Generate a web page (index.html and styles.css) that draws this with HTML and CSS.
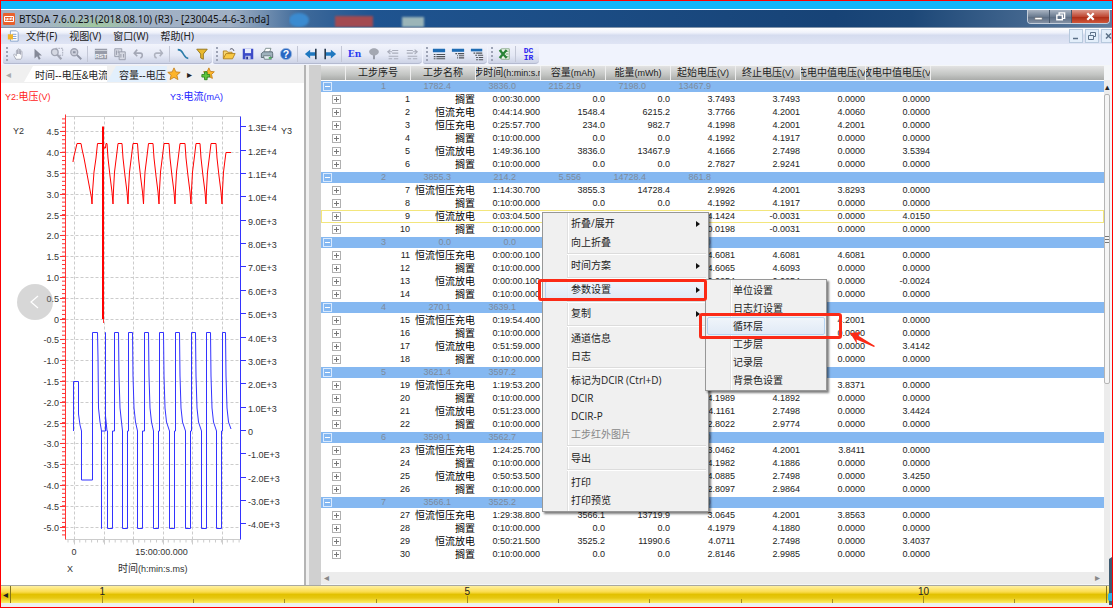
FILE: index.html
```html
<!DOCTYPE html>
<html lang="zh-CN">
<head>
  <meta charset="UTF-8">
  <title>BTSDA 7.6.0.231</title>
  <link rel="stylesheet" href="styles.css">
</head>
<body>
  <div class="window">
    <div class="strip"></div>

    <header class="titlebar">
      <svg class="app-icon" viewBox="0 0 12 12"><rect width="12" height="12" rx="1" fill="#e8602c"/><path d="M1.500 3.500h9v5h-9z" fill="none" stroke="#fff"/><path d="M3 5v2h1.500V5M6 5v2M7.500 7V5H9v2" fill="none" stroke="#fff" stroke-width=".8"/></svg>
      <h1>BTSDA 7.6.0.231(2018.08.10) (R3) - [230045-4-6-3.nda]</h1>
      <div class="desktop-blur"><i class="orb"></i><i class="red"></i><i class="paper"></i></div>
      <div class="win-buttons">
        <button aria-label="最小化"><svg viewBox="0 0 12 12"><path d="M2 7h8v2.500H2z" fill="#fff" stroke="#555" stroke-width=".5"/></svg></button>
        <button aria-label="还原"><svg viewBox="0 0 12 12"><path d="M4.500 4V2h6v6H8.500M2 4.500h6v5H2z" fill="none" stroke="#fff" stroke-width="1.500"/></svg></button>
        <button class="close" aria-label="关闭"><svg viewBox="0 0 12 12"><path d="M2.500 2.500l7 7M9.500 2.500l-7 7" stroke="#fff" stroke-width="2.400"/></svg></button>
      </div>
    </header>

    <nav class="menubar">
      <svg class="doc-icon" viewBox="0 0 14 14"><path d="M4 1h7l2 2v10H4z" fill="#fff" stroke="#7d9bc4"/><path d="M6 5h5M6 7.500h5M6 10h5" stroke="#6a90cc"/><path d="M1 5h6v6H1z" fill="#f0b429"/></svg>
      <button>文件(F)</button>
      <button>视图(V)</button>
      <button>窗口(W)</button>
      <button>帮助(H)</button>
      <div class="mdi-buttons">
        <button aria-label="最小化子窗口"><svg viewBox="0 0 12 12"><path d="M3 8.500h5" stroke="#5b7087" stroke-width="1.500"/></svg></button>
        <button aria-label="还原子窗口"><svg viewBox="0 0 12 12"><path d="M4.500 4.500V2.500h5v4H8M2.500 5.500h5v4h-5z" fill="none" stroke="#5b7087"/></svg></button>
        <button aria-label="关闭子窗口"><svg viewBox="0 0 12 12"><path d="M4 3.500l5 5M9 3.500l-5 5" stroke="#5b7087" stroke-width="1.500"/></svg></button>
      </div>
    </nav>

    <div class="toolbar">
      <div class="band">
        <span class="grip"></span>
        <button aria-label="平移"><svg viewBox="0 0 16 16"><path d="M4.500 14L2 9.500c-.5-1.300.7-1.800 1.500-.8L5 10V4.500c0-1.300 1.500-1.300 1.500 0V8V3c0-1.300 1.700-1.300 1.700 0v5V3.500c0-1.200 1.600-1.200 1.600 0V8.500V5.500c0-1.200 1.600-1.200 1.600 0V10c0 2-.6 3-1.400 4z" fill="#fafbfd" stroke="#a2a6b4"/></svg></button>
        <button aria-label="选择"><svg viewBox="0 0 16 16"><path d="M4 2v11l3-2.500L9 14.500l2-1-2-3.800h3.500z" fill="#858a98"/></svg></button>
        <button aria-label="框选缩放"><svg viewBox="0 0 16 16"><rect x="6.500" y="1.500" width="8" height="8" fill="none" stroke="#a0a4b2" stroke-dasharray="2 1"/><circle cx="5.500" cy="6" r="3.800" fill="#d5d8e2" stroke="#a0a4b2" stroke-width="1.500"/><path d="M8.500 9l4.500 5" stroke="#a0a4b2" stroke-width="2.500"/></svg></button>
        <button aria-label="缩放"><svg viewBox="0 0 16 16"><circle cx="6" cy="6" r="4" fill="#cdd0dc" stroke="#a0a4b2" stroke-width="1.500"/><path d="M4.500 6h3M9 9l5 5" stroke="#8f94a4" stroke-width="2.200"/></svg></button>
        <span class="sep"></span>
        <button aria-label="复位"><svg viewBox="0 0 16 16"><rect x="1" y="2" width="14" height="12" fill="#989ca9"/><path d="M1 4h14" stroke="#d4d7e0"/><text x="8" y="12" class="glyph-rst">RST</text></svg></button>
        <button aria-label="复制"><svg viewBox="0 0 16 16"><path d="M2 2h8v9H2z" fill="#d6d9e3" stroke="#9599a8"/><path d="M7 5.500h7v9H7z" fill="#d6d9e3" stroke="#9599a8"/><path d="M4 4v5M6 4v3M9 8v4M12 8v4" stroke="#9599a8"/></svg></button>
        <button aria-label="撤销"><svg viewBox="0 0 16 16"><path d="M3 7h6.500c3 0 3 5 0 5.500M6 3L2.500 7 6 10.500" fill="none" stroke="#a4a8b6" stroke-width="1.800"/></svg></button>
        <button aria-label="重做"><svg viewBox="0 0 16 16"><path d="M12.500 7H6.500c-3.500 0-3 5 0 5.500M10 3l3 4-3 3.500" fill="none" stroke="#aeb2bf" stroke-width="1.800"/></svg></button>
        <span class="sep"></span>
        <button aria-label="曲线"><svg viewBox="0 0 16 16"><path d="M2 3c5 0 5 3 7 6s3 4 5 4" fill="none" stroke="#2b7ba8" stroke-width="1.800"/></svg></button>
        <button aria-label="筛选"><svg viewBox="0 0 16 16"><path d="M2 2.500h12L9.500 8v6l-3-1.500V8z" fill="#e9b92f" stroke="#8f6e14"/></svg></button>
      </div>

      <div class="band">
        <span class="grip"></span>
        <button aria-label="打开"><svg viewBox="0 0 16 16"><path d="M1.500 13V4.500h4l1 1.500h5v2" fill="#f7d774" stroke="#b07f1c"/><path d="M1.500 13.500l3-6h10.500l-3 6z" fill="#f9c945" stroke="#b07f1c"/><path d="M9 3c2-2 4-1 4.500 1.500" fill="none" stroke="#334"/></svg></button>
        <button aria-label="保存"><svg viewBox="0 0 16 16"><path d="M2 2h12v12H2z" fill="#3c4bc8"/><path d="M4.500 2h7v5h-7z" fill="#e8ecfb"/><path d="M5 10h6v4H5z" fill="#c3c9ec"/><path d="M6 11h2v3H6z" fill="#27318c"/></svg></button>
        <button aria-label="打印"><svg viewBox="0 0 16 16"><path d="M4.500 6L6.500 1.500h6L11 6" fill="#fff" stroke="#788"/><path d="M1.500 7.500L4 5.500h10l.5 2V12H1.500z" fill="#9fb2bd" stroke="#54646e"/><path d="M4 10h8l1 4H5z" fill="#e3eef2" stroke="#68787f"/><path d="M10 11.500h3v2h-3z" fill="#43ad55"/></svg></button>
        <button aria-label="帮助"><svg viewBox="0 0 16 16"><circle cx="8" cy="8" r="6.500" fill="#2768c4" stroke="#9ab5dd"/><text x="8" y="12" class="glyph-help">?</text></svg></button>
        <span class="sep"></span>
        <button aria-label="向左"><svg viewBox="0 0 16 16"><path d="M1 8l6-5v3h6v4H7v3z" fill="#1f78c0"/><path d="M13.500 2v12" stroke="#23364a" stroke-width="1.800"/></svg></button>
        <button aria-label="向右"><svg viewBox="0 0 16 16"><path d="M15 8L9 3v3H3v4h6v3z" fill="#1f78c0"/><path d="M2.500 2v12" stroke="#23364a" stroke-width="1.800"/></svg></button>
        <span class="sep"></span>
        <button class="en">En</button>
        <button aria-label="树"><svg viewBox="0 0 16 16"><path d="M7 9h2v5H7z" fill="#8e939f"/><path d="M8 1.500c3 0 6 2 5.500 4.500S11 9 8 10C5 9 3 8.500 2.500 6S5 1.500 8 1.500z" fill="#a4a8b2"/></svg></button>
        <button aria-label="上一层"><svg viewBox="0 0 16 16"><path d="M7 4h7M7 7h7M2 5.500h5M5 3L2 5.500 5 8M3 10.500h11M3 13.500h4M9 13.500h5" fill="none" stroke="#a9adba" stroke-width="1.200"/></svg></button>
        <button aria-label="下一层"><svg viewBox="0 0 16 16"><path d="M2 4h7M2 7h7M9 5.500h5M11 3l3 2.500L11 8M3 10.500h11M3 13.500h4M9 13.500h5" fill="none" stroke="#a9adba" stroke-width="1.200"/></svg></button>
      </div>

      <div class="band">
        <span class="grip"></span>
        <button aria-label="循环层"><svg viewBox="0 0 16 16"><path d="M1 2h14v4H1z" fill="#1f6cb4"/><path d="M2 8.500h2M5 8.500h10M2 11h2M5 11h10M2 13.500h2M5 13.500h10" stroke="#4d5157" stroke-width="1.200"/></svg></button>
        <button aria-label="工步层"><svg viewBox="0 0 16 16"><path d="M1 2h14v3.500H1z" fill="#1f6cb4"/><path d="M5 7.500h2M8 7.500h7M7 10h1M9 10h6M7 12.500h1M9 12.500h6" stroke="#4d5157" stroke-width="1.300"/></svg></button>
        <button aria-label="记录层"><svg viewBox="0 0 16 16"><path d="M1 2h13v3H1z" fill="#1f6cb4"/><path d="M4 7h2M7 7h7M6 9.500h2M9 9.500h6M7 12h2M10 12h5M7 14.500h2M10 14.500h5" stroke="#4d5157" stroke-width="1.200"/></svg></button>
      </div>

      <div class="band">
        <span class="grip"></span>
        <button aria-label="导出Excel"><svg viewBox="0 0 16 16"><path d="M5 2h9v12H5z" fill="#eef5ec" stroke="#88a888"/><path d="M10 5h3M10 8h3M10 11h3" stroke="#6d9a6d"/><path d="M3 3.500l8 9M11 3.500l-8 9" stroke="#2a8437" stroke-width="2.600"/></svg></button>
        <span class="sep"></span>
        <button class="dcir"><span>DC</span><span>IR</span></button>
      </div>
    </div>

    <main class="main">
      <section class="chart-pane">
        <div class="tabs">
          <button class="tab-arrow dim" aria-label="上一个">◂</button>
          <button class="tab">时间--电压&amp;电流</button>
          <button class="tab second">容量--电压</button>
          <button class="tab-icon" aria-label="收藏"><svg viewBox="0 0 16 16"><path d="M8 1l2.100 4.600 5 .5-3.800 3.300 1.200 5L8 11.800l-4.500 2.600 1.200-5L.9 6.100l5-.5z" fill="#fdb42a" stroke="#c7811a"/></svg></button>
          <button class="tab-arrow" aria-label="下一个">▸</button>
          <button class="tab-icon" aria-label="添加收藏"><svg viewBox="0 0 16 16"><path d="M9 1l1.800 4 4.400.5-3.200 3 1 4.500L9 10.800 5 13l1-4.500-3.200-3L7.200 5z" fill="#fdb42a" stroke="#c7811a"/><path d="M4 5.500h3v3h3v3H7v3H4v-3H1v-3h3z" fill="#5ec73c" stroke="#2d8420"/></svg></button>
        </div>
        <div class="legend">
          <span class="y2">Y2:<b>电压</b>(V)</span>
          <span class="y3">Y3:<b>电流</b>(mA)</span>
        </div>
        <svg class="chart" id="chart" viewBox="1 105 303 480"></svg>
        <button class="prev" aria-label="上一张"><svg viewBox="0 0 16 16"><path d="M11 2L4 8l7 6" fill="none" stroke="#fff" stroke-width="1.200"/></svg></button>
      </section>

      <div class="splitter"></div>

      <section class="grid-pane">
        <div class="grid-row">
          <div class="grid-scroll">
            <table class="steps">
              <thead>
                <tr>
                  <th class="expand"></th>
                  <th><div>工步序号</div></th>
                  <th><div>工步名称</div></th>
                  <th><div>工步时间<small>(h:min:s.ms)</small></div></th>
                  <th><div>容量<small>(mAh)</small></div></th>
                  <th><div>能量<small>(mWh)</small></div></th>
                  <th><div>起始电压<small>(V)</small></div></th>
                  <th><div>终止电压<small>(V)</small></div></th>
                  <th><div>充电中值电压<small>(V)</small></div></th>
                  <th><div>放电中值电压<small>(V)</small></div></th>
                  <th class="rest"></th>
                </tr>
              </thead>
              <tbody id="rows"></tbody>
            </table>
          </div>
          <div class="vscroll">
            <span class="up">▴</span>
            <div class="thumb"><i></i></div>
          </div>
        </div>
        <div class="hscroll"><span>◂</span><span>▸</span></div>
      </section>

      <div class="menu context">
        <ul>
          <li><button class="sub">折叠/展开</button></li>
          <li><button>向上折叠</button></li>
          <li class="line"></li>
          <li><button class="sub">时间方案</button></li>
          <li class="line"></li>
          <li><button class="sub hover">参数设置</button></li>
          <li class="line"></li>
          <li><button class="sub">复制</button></li>
          <li class="line"></li>
          <li><button>通道信息</button></li>
          <li><button>日志</button></li>
          <li class="line"></li>
          <li><button>标记为DCIR (Ctrl+D)</button></li>
          <li><button>DCIR</button></li>
          <li><button>DCIR-P</button></li>
          <li><button disabled>工步红外图片</button></li>
          <li class="line"></li>
          <li><button>导出</button></li>
          <li class="line"></li>
          <li><button>打印</button></li>
          <li><button>打印预览</button></li>
        </ul>
      </div>
      <div class="menu submenu">
        <ul>
          <li><button>单位设置</button></li>
          <li><button>日志灯设置</button></li>
          <li><button class="hover">循环层</button></li>
          <li><button>工步层</button></li>
          <li><button>记录层</button></li>
          <li><button>背景色设置</button></li>
        </ul>
      </div>
      <div class="mark mark-param"></div>
      <div class="mark mark-cycle"></div>
      <svg class="mark-arrow" viewBox="0 0 26 16"><path d="M0 1l11-1-3 3.500L25 14l-1 1L6.500 7.500 7 12z" fill="#fb2a17"/></svg>
    </main>

    <footer class="ruler">
      <button aria-label="向左滚动">◂</button>
      <div class="scale">
        <span class="big">1</span><span></span><span></span><span></span><span class="big">5</span><span></span>
        <span></span><span></span><span></span><span class="big">10</span><span></span><span></span>
      </div>
      <svg class="dock" viewBox="0 0 4 48"><path d="M1 2l3-2v48H1z" fill="#3d5a70"/><circle cx="3" cy="40" r="4" fill="#2fb5e6"/></svg>
    </footer>
  </div>

  <script src="script.js"></script>
</body>
</html>
```

FILE: styles.css
```css
* {
  box-sizing: border-box;
}
body {
  margin: 0;
  font-family: "Liberation Sans", "Noto Sans CJK SC", sans-serif;
  font-size: 10px;
  color: #222;
}
button {
  margin: 0;
  padding: 0;
  border: 0;
  background: none;
  font: inherit;
  color: inherit;
}
ul {
  list-style: none;
  margin: 0;
  padding: 0;
}
.window {
  display: flex;
  flex-direction: column;
  height: 100vh;
  border: 1px solid #f00;
  background: #f0f0f0;
  overflow: hidden;
}
.strip {
  flex: none;
  height: 9px;
  background: #12b6f9;
  border-bottom: 1px solid #fff;
}

/* title bar */
.titlebar {
  flex: none;
  display: flex;
  align-items: center;
  height: 18px;
  padding-left: 2px;
  background:
    radial-gradient(ellipse 50px 12px at 92px 17px, rgba(160, 205, 150, .9), transparent),
    linear-gradient(90deg, #a3b3c7 0, #a0b0c4 230px, #3f6a9a 300px, #1f5490 370px, #174376 75%, #1d4878 82%, #5f7d9f);
  border-bottom: 1px solid #8496ab;
}
.app-icon {
  width: 12px;
  height: 12px;
}
.titlebar h1 {
  flex: none;
  width: 270px;
  margin: 0 0 0 4px;
  font: 10px "Noto Sans", sans-serif;
  color: #111;
  white-space: nowrap;
}
.desktop-blur {
  flex: 1;
  display: flex;
  align-self: stretch;
  align-items: flex-end;
  overflow: hidden;
}
.desktop-blur i {
  filter: blur(1px);
}
.orb {
  width: 20px;
  height: 14px;
  border-radius: 50%;
  background: #3b8bd0;
}
.red {
  width: 38px;
  height: 11px;
  margin-left: 26px;
  background: #a34a50;
}
.paper {
  width: 22px;
  height: 10px;
  margin-left: 29px;
  background: #9bb5b8;
}
.win-buttons {
  display: flex;
  align-self: flex-start;
  border: 1px solid #c3cedb;
  border-top: 0;
  border-radius: 0 0 4px 4px;
  margin-right: 2px;
  overflow: hidden;
}
.win-buttons button {
  display: flex;
  align-items: center;
  justify-content: center;
  width: 22px;
  height: 13px;
  border-right: 1px solid #48586c;
  background: linear-gradient(#a9b4c2, #6c7c91 50%, #58697f 51%, #8492a5);
}
.win-buttons .close {
  width: 37px;
  border: 0;
  background: linear-gradient(#dc9a8c, #c04a35 50%, #ab2a14 51%, #d0573a);
}
.win-buttons svg {
  width: 11px;
  height: 11px;
}

/* menu bar */
.menubar {
  flex: none;
  display: flex;
  align-items: center;
  gap: 12px;
  height: 16px;
  padding-left: 6px;
  background: linear-gradient(#fff, #eef1fa 30%, #d5dcef 45%, #dfe4f4);
  font-family: "Noto Sans", "Noto Sans CJK SC", sans-serif;
}
.menubar button {
  line-height: 14px;
  white-space: nowrap;
}
.doc-icon {
  width: 12px;
  height: 12px;
  margin-right: -5px;
}
.mdi-buttons {
  display: flex;
  gap: 2px;
  margin-left: auto;
}
.mdi-buttons button {
  width: 14px;
  height: 14px;
  border: 1px solid #b7c9dd;
  background: #e3eefa;
}
.mdi-buttons svg {
  display: block;
  width: 12px;
  height: 12px;
}
.mdi-buttons button:last-child {
  width: 11px;
}

/* toolbar */
.toolbar {
  flex: none;
  display: flex;
  gap: 1px;
  height: 21px;
  padding-left: 2px;
  background: #f0f3fd;
}
.band {
  display: flex;
  align-items: center;
  height: 20px;
  padding-right: 1px;
  border-radius: 0 0 4px 2px;
  background: linear-gradient(#f2f4fc, #e4e8f5 60%, #cdd3e6);
  border-bottom: 1px solid #b4bad0;
}
.band button {
  display: flex;
  align-items: center;
  justify-content: center;
  width: 19px;
  height: 19px;
}
.band svg {
  width: 14px;
  height: 14px;
}
.grip {
  width: 2px;
  height: 14px;
  margin: 0 1px 0 3px;
  background: repeating-linear-gradient(#9da3b5 0 2px, transparent 2px 4px);
}
.sep {
  width: 1px;
  height: 16px;
  margin: 0 3px 0 2px;
  background: #c3c7d6;
}
.glyph-rst {
  font: bold 7px "Liberation Sans", sans-serif;
  fill: #f3f4f8;
  text-anchor: middle;
}
.glyph-help {
  font: bold 12px "Liberation Sans", sans-serif;
  fill: #fff;
  text-anchor: middle;
}
.band .en {
  font: bold 9px "DejaVu Serif", serif;
  color: #2a3bf0;
}
.band .dcir {
  flex-direction: column;
  font: bold 8px "Liberation Mono", monospace;
  line-height: 7px;
  color: #2a22f0;
}

/* panes */
.main {
  flex: 1;
  display: flex;
  min-height: 0;
  position: relative;
}
.chart-pane {
  flex: none;
  width: 303px;
  background: #fff;
  position: relative;
}
.tabs {
  display: flex;
  align-items: center;
  height: 18px;
  background: #f0f0f0;
}
.tab {
  height: 16px;
  width: 83px;
  padding-left: 11px;
  background: #fff;
  clip-path: polygon(0 100%, 9px 0, 100% 0, 100% 100%);
  text-align: left;
  white-space: nowrap;
  overflow: hidden;
}
.tab.second {
  width: 60px;
  padding-left: 12px;
  background: #e2effc;
}
.tab-arrow {
  width: 14px;
}
.tab-arrow.dim {
  width: 23px;
  padding-right: 8px;
  color: #aaa;
}
.tab-icon {
  width: 14px;
  height: 14px;
  margin-right: 1px;
}
.tab-arrow + .tab-icon {
  margin-left: 5px;
}
.tab-icon svg {
  display: block;
}
.legend {
  display: flex;
  height: 22px;
  padding: 7px 0 0 4px;
  font-size: 9px;
  line-height: 14px;
}
.legend span {
  flex: 0 0 165px;
}
.legend b {
  font-size: 10px;
  font-weight: normal;
}
.y2 {
  color: #f22;
}
.y3 {
  color: #22f;
}
.chart {
  display: block;
  width: 100%;
}
.chart text {
  font-size: 9px;
  fill: #333;
}
.chart .cjk {
  font-size: 10px;
}
.end {
  text-anchor: end;
}
.mid {
  text-anchor: middle;
}
.gridline {
  stroke: #ccc;
  stroke-dasharray: 3 2;
}
.frame {
  stroke: #ccc;
}
.axis-red {
  stroke: #f33;
}
.axis-blue {
  stroke: #33f;
}
.series-red, .series-blue {
  fill: none;
  stroke: #f00;
}
.series-blue {
  stroke: #33f;
}
.spike {
  stroke: #f00;
  stroke-width: 2;
}
.prev {
  position: absolute;
  left: 16px;
  top: 219px;
  width: 36px;
  height: 36px;
  border-radius: 50%;
  background: rgba(140, 140, 140, .35);
}
.prev svg {
  display: block;
  width: 16px;
  height: 16px;
  margin: auto;
}
.splitter {
  flex: none;
  width: 17px;
  border-left: 2px solid #b4b4b4;
  background: linear-gradient(90deg, #f0f0f0 3px, #d0d0d0 3px);
}

/* step table */
.grid-pane {
  flex: 1;
  display: flex;
  flex-direction: column;
  min-width: 0;
  padding: 1px 2px 1px 0;
  background: #f4f6f8;
}
.grid-row {
  flex: 1;
  display: flex;
  min-height: 0;
}
.grid-scroll {
  flex: 1;
  min-width: 0;
  overflow: hidden;
  background: #fff;
}
.steps {
  width: 100%;
  table-layout: fixed;
  border-spacing: 0;
}
.steps th {
  width: 65px;
  height: 14px;
  padding: 0;
  border-right: 1px solid #eee;
  background: linear-gradient(#e2e2e2, #c4c6c4 60%, #a9aba9);
  font-weight: normal;
}
.steps th div {
  display: flex;
  justify-content: center;
  overflow: hidden;
  line-height: 14px;
  white-space: nowrap;
}
.steps small {
  font-size: 9px;
}
.steps .expand {
  width: 25px;
}
.steps .rest {
  width: auto;
  border: 0;
}
.steps td {
  padding: 0 1px 0 0;
  border-top: 1px solid #fff;
  border-bottom: 1px solid #fff;
  font-size: 9px;
  line-height: 11px;
  height: 13px;
  text-align: right;
  white-space: nowrap;
}
.steps td.name {
  font-size: 10px;
  color: #000;
}
.steps td.toggle {
  padding: 0 0 0 11px;
  text-align: left;
}
.steps .cycle td {
  padding-right: 25px;
  background: #85b8f1;
  color: #7d8b9c;
}
.steps .cycle td.toggle {
  padding: 0 0 0 2px;
}
.toggle button {
  display: block;
  width: 9px;
  height: 9px;
  border: 1px solid #b0b0b0;
  background: linear-gradient(#777, #777) center / 5px 1px no-repeat, linear-gradient(#777, #777) center / 1px 5px no-repeat;
}
.cycle .toggle button {
  border-color: #d9eaff;
  background: linear-gradient(#fff, #fff) center / 5px 1px no-repeat;
}
.steps .current td {
  border-color: #f3e67c;
}
.steps .current td:first-child {
  border-left: 1px solid #f3e67c;
  padding-left: 10px;
}
.steps .current td:last-child {
  border-right: 1px solid #f3e67c;
}
.vscroll {
  width: 6px;
  margin-top: 14px;
  background: #ececec;
  overflow: hidden;
}
.up {
  display: block;
  height: 14px;
  line-height: 14px;
  font-size: 9px;
  text-align: center;
}
.thumb {
  display: flex;
  align-items: center;
  justify-content: center;
  height: 59%;
  border: 1px solid #b5b5b5;
  border-radius: 2px;
  background: #f5f5f5;
}
.thumb i {
  width: 4px;
  height: 7px;
  background: repeating-linear-gradient(#777 0 1px, transparent 1px 3px);
}
.hscroll {
  flex: none;
  display: flex;
  justify-content: space-between;
  height: 12px;
  padding: 0 10px 0 3px;
  background: #ececec;
  line-height: 12px;
  color: #888;
}

/* popup menus */
.menu {
  position: absolute;
  border: 1px solid #979797;
  background: linear-gradient(90deg, transparent 24px, #e0e0e0 24px 25px, #fff 25px 26px, transparent 26px) #f0f0f0;
  box-shadow: 2px 2px 2px rgba(0, 0, 0, .5);
  font-family: "Open Sans", "Noto Sans CJK SC", sans-serif;
}
.context {
  left: 541px;
  top: 147px;
  width: 167px;
  padding: 2px;
}
.submenu {
  left: 704px;
  top: 214px;
  width: 122px;
  padding: 1px;
}
.menu button {
  display: block;
  width: 100%;
  height: 18px;
  padding-left: 25px;
  border: 1px solid transparent;
  border-radius: 2px;
  line-height: 15px;
  text-align: left;
  white-space: nowrap;
}
.menu button:disabled {
  color: #888;
}
.menu .sub {
  display: flex;
  justify-content: space-between;
  padding-right: 5px;
}
.sub::after {
  content: "";
  align-self: center;
  border: 3px solid transparent;
  border-left: 4px solid #111;
  border-right: 0;
}
.menu .hover {
  border-color: #b5d3f2;
  background: linear-gradient(rgba(240, 246, 253, .8), rgba(220, 232, 247, .8));
}
.line {
  height: 6px;
  margin-left: 22px;
  background: linear-gradient(transparent 2px, #dcdcdc 2px 3px, #fff 3px 4px, transparent 4px);
}
.mark {
  position: absolute;
  border: 3px solid #fb2a17;
  border-radius: 3px;
  pointer-events: none;
}
.mark-param {
  left: 537px;
  top: 214px;
  width: 169px;
  height: 22px;
}
.mark-cycle {
  left: 698px;
  top: 248px;
  width: 143px;
  height: 26px;
}
.mark-arrow {
  position: absolute;
  left: 849px;
  top: 267px;
  width: 26px;
  height: 16px;
}

/* bottom ruler */
.ruler {
  flex: none;
  display: flex;
  height: 22px;
  padding-right: 5px;
  position: relative;
  border-top: 1px solid #a9a9a0;
  border-bottom: 4px solid #eef0f0;
  background: linear-gradient(#fff0a0, #fbdc4c 35%, #e2c100 50%, #e6c810 70%, #fff06a);
}
.ruler button {
  width: 10px;
  border-right: 1px solid #85741a;
}
.scale {
  flex: 1;
  display: grid;
  grid-template-columns: repeat(12, 1fr);
  border-right: 1px solid #85741a;
}
.scale span {
  margin-right: -6px;
  width: 12px;
  justify-self: end;
  text-align: center;
  line-height: 12px;
  background: linear-gradient(#a08c20, #a08c20) center bottom / 1px 4px no-repeat;
}
.scale .big {
  background-size: 1px 7px;
}
.scale span:last-child {
  background: none;
}
.dock {
  position: absolute;
  right: 0;
  bottom: -2px;
  width: 4px;
  height: 48px;
}
```

FILE: script.js
```js
// [序号, 名称, 时间, 容量, 能量, 起始电压, 终止电压, 充电中值, 放电中值]
const REST = '搁置', CC = '恒流充电', CV = '恒压充电', DC = '恒流放电', CCCV = '恒流恒压充电';
const Z = '0.0000';

const cycles = [
  { head: ['1', '1782.4', '3836.0', '215.219', '7198.0', '13467.9'], steps: [
    [1, REST, '0:00:30.000', '0.0', '0.0', '3.7493', '3.7493', Z, Z],
    [2, CC, '0:44:14.900', '1548.4', '6215.2', '3.7766', '4.2001', '4.0060', Z],
    [3, CV, '0:25:57.700', '234.0', '982.7', '4.1998', '4.2001', '4.2001', Z],
    [4, REST, '0:10:00.000', '0.0', '0.0', '4.1992', '4.1917', Z, Z],
    [5, DC, '1:49:36.100', '3836.0', '13467.9', '4.1666', '2.7498', Z, '3.5394'],
    [6, REST, '0:10:00.000', '0.0', '0.0', '2.7827', '2.9241', Z, Z]
  ]},
  { head: ['2', '3855.3', '214.2', '5.556', '14728.4', '861.8'], steps: [
    [7, CCCV, '1:14:30.700', '3855.3', '14728.4', '2.9926', '4.2001', '3.8293', Z],
    [8, REST, '0:10:00.000', '0.0', '0.0', '4.1992', '4.1917', Z, Z],
    [9, DC, '0:03:04.500', '', '', '4.1424', '-0.0031', Z, '4.0150'],
    [10, REST, '0:10:00.000', '', '', '0.0198', '-0.0031', Z, Z]
  ]},
  { head: ['3', '0.0', '0.0', '', '', '0.0'], steps: [
    [11, CCCV, '0:00:00.100', '', '', '4.6081', '4.6081', '4.6081', Z],
    [12, REST, '0:10:00.000', '', '', '4.6065', '4.6093', Z, Z],
    [13, DC, '0:00:00.100', '', '', '0.0254', '0.0254', Z, '-0.0024'],
    [14, REST, '0:10:00.000', '', '', '', '', Z, Z]
  ]},
  { head: ['4', '270.1', '3639.1', '', '', ''], steps: [
    [15, CCCV, '0:19:54.400', '', '', '', '', '4.2001', Z],
    [16, REST, '0:10:00.000', '', '', '', '', Z, Z],
    [17, DC, '0:51:59.000', '', '', '', '', Z, '3.4142'],
    [18, REST, '0:10:00.000', '', '', '', '', Z, Z]
  ]},
  { head: ['5', '3621.4', '3597.2', '', '', ''], steps: [
    [19, CCCV, '1:19:53.200', '', '', '', '', '3.8371', Z],
    [20, REST, '0:10:00.000', '', '', '4.1989', '4.1892', Z, Z],
    [21, DC, '0:51:23.000', '', '', '4.1161', '2.7498', Z, '3.4424'],
    [22, REST, '0:10:00.000', '', '', '2.8022', '2.9774', Z, Z]
  ]},
  { head: ['6', '3599.1', '3562.7', '', '', '0.0'], steps: [
    [23, CCCV, '1:24:25.700', '', '', '3.0462', '4.2001', '3.8411', Z],
    [24, REST, '0:10:00.000', '', '', '4.1982', '4.1886', Z, Z],
    [25, DC, '0:50:53.500', '', '', '4.0885', '2.7498', Z, '3.4250'],
    [26, REST, '0:10:00.000', '', '', '2.8097', '2.9864', Z, Z]
  ]},
  { head: ['7', '3566.1', '3525.2', '', '', '0.0'], steps: [
    [27, CCCV, '1:29:38.800', '3566.1', '13719.9', '3.0645', '4.2001', '3.8563', Z],
    [28, REST, '0:10:00.000', '0.0', '0.0', '4.1979', '4.1880', Z, Z],
    [29, DC, '0:50:21.500', '3525.2', '11990.6', '4.0711', '2.7498', Z, '3.4037'],
    [30, REST, '0:10:00.000', '0.0', '0.0', '2.8146', '2.9985', Z, Z]
  ]}
];

const toggle = label => `<td class="toggle"><button aria-label="${label}"></button></td>`;

document.getElementById('rows').innerHTML = cycles.map(c => {
  const head = `<tr class="cycle">${toggle('折叠')}${c.head.map(v => `<td>${v}</td>`).join('')}<td></td><td></td><td></td><td></td></tr>`;
  const steps = c.steps.map(s => `
    <tr class="${s[0] === 9 ? 'current' : ''}">
      ${toggle('展开')}${s.map((v, i) => `<td${i === 1 ? ' class="name"' : ''}>${v}</td>`).join('')}<td></td>
    </tr>`).join('');
  return head + steps;
}).join('');

// chart
const LEFT = 65.5, RIGHT = 240.5, TOP = 116.5, BOTTOM = 539.5;
const yVolt = v => 318.6 - v * 41.6;
const yCurr = k => 431 - k * 23.36;
const line = (x1, y1, x2, y2, cls) => `<line x1="${x1}" y1="${y1}" x2="${x2}" y2="${y2}" class="${cls}"/>`;
const text = (x, y, s, cls = '') => `<text x="${x}" y="${y}" class="${cls}">${s}</text>`;

let svg = line(LEFT, TOP, RIGHT, TOP, 'frame') + line(LEFT, BOTTOM, RIGHT, BOTTOM, 'frame');

for (let i = -10; i <= 9; i++) {
  const y = Math.round(yVolt(i / 2)) + 0.5;
  svg += line(LEFT, y, RIGHT, y, 'gridline');
  svg += line(60, y, LEFT, y, 'axis-red');
  svg += text(59, y + 3, i === 0 ? '0' : (i / 2).toFixed(1), 'end');
}
for (let i = -52; i <= 48; i++) {
  svg += line(62, yVolt(i / 10), LEFT, yVolt(i / 10), 'axis-red');
}
for (let i = 0; i < 6; i++) {
  const x = Math.round(74 + i * 29.5) + 0.5;
  svg += line(x, TOP, x, BOTTOM, 'gridline') + line(x, BOTTOM, x, BOTTOM + 5, 'frame');
}
for (let x = 68; x < RIGHT; x += 5.9) {
  svg += line(x, BOTTOM, x, BOTTOM + 3, 'frame');
}
for (let k = -4; k <= 13; k++) {
  const y = Math.round(yCurr(k)) - 0.5;
  const label = k === 0 ? '0' : k >= 10 ? (k / 10).toFixed(1) + 'E+4' : k.toFixed(1) + 'E+3';
  svg += line(RIGHT, y, 246, y, 'axis-blue') + text(248, y + 4, label);
}
svg += line(LEFT, TOP - 2, LEFT, BOTTOM, 'axis-red') + line(RIGHT, TOP, RIGHT, BOTTOM, 'axis-blue');

// voltage: plateau at 4.2 V, drop to 2.75 V at each of these positions
const lows = [113, 128, 143.5, 159, 175, 191, 206, 222];
let volt = '73,162 73.5,158 75,152 77,143.5 81,143.5 82,149 84,158 87,174 90,190 91.5,198 92,204 92.5,192 94,172 96,158 97.500,143.5 103,143.5 104,148 105.5,148 106,143.500 107,143.5';
lows.forEach((m, i) => {
  volt += ` ${m - 6},143.500 ${m - 5},158 ${m - 3},176 ${m - 1},192 ${m},204 ${m + 0.5},190 ${m + 1.500},172 ${m + 3.500},156`;
  volt += i < lows.length - 1 ? ` ${m + 5},143.5` : ' 226,152.500 231,152.5';
});
svg += `<polyline points="${volt}" class="series-red"/>`;
svg += line(103, 126.5, 103, 319, 'spike') + line(103.5, 319, 103.5, 323, 'axis-red');

const lowsI = [[107.5, 112.5], [122.5, 127.5], [137.5, 142.5], [153.5, 158.5], [169.5, 174.5], [185.5, 190.5], [201.5, 206.5], [216.5, 221.5]];
const highsI = [[114.5, 118.5], [128.5, 132.5], [144.5, 148.5], [159.5, 163.5], [175.5, 179.5], [191.5, 195.5], [206.5, 210.5], [222.5, 225.5]];
let curr = '73.5,431 73.5,381.5 78.5,381.5 78.5,414 80,425 81.5,431 81.500,480 92.5,480 92.5,332.500 97.500,332.5 98,358 98.5,408 100,422 101.5,431 101.500,528.5 101.500,431 105.5,431 105.5,332.5 105.5,416 107,431';
lowsI.forEach(([a, b], i) => {
  const [c, d] = highsI[i];
  curr += ` ${a},431 ${a},528.500 ${b},528.500 ${b},431 ${c},431 ${c},332.500 ${d},332.500 ${d + 0.5},376 ${d + 1.500},408 ${d + 3},422`;
});
svg += `<polyline points="${curr} 231,429" class="series-blue"/>`;

svg += text(13, 134, 'Y2') + text(281, 134, 'Y3');
svg += text(74, 555, '0', 'mid') + text(161.5, 555, '15:00:00.000', 'mid');
svg += text(67, 572, 'X') + text(118, 572, '<tspan class="cjk">时间</tspan>(h:min:s.ms)');

document.getElementById('chart').innerHTML = svg;
```
